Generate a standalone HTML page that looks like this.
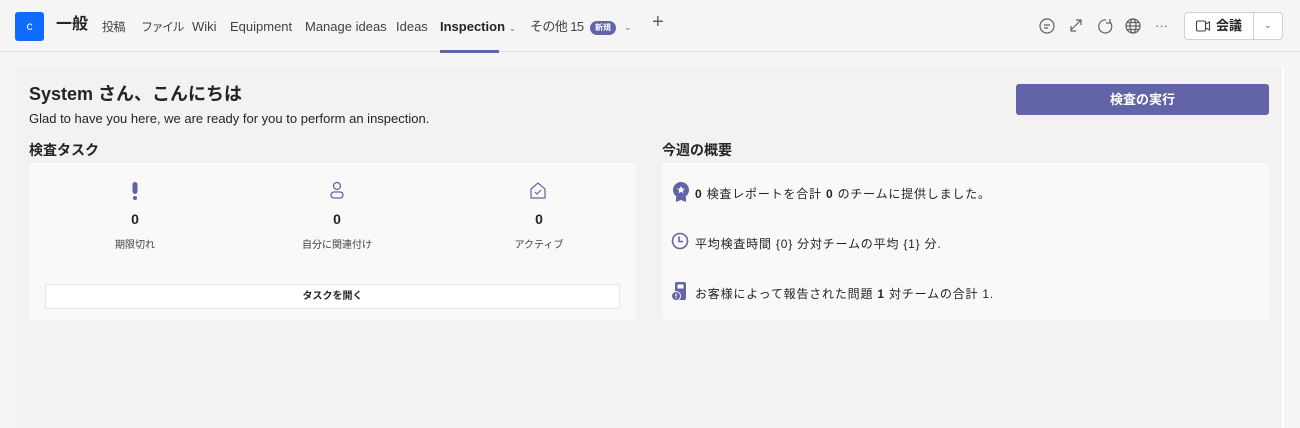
<!DOCTYPE html>
<html><head><meta charset="utf-8"><style>
*{box-sizing:border-box;margin:0;padding:0}
body{width:1300px;height:416px;overflow:hidden;background:#f5f5f5;font-family:"Liberation Sans","Noto Sans CJK JP",sans-serif;color:#242424;position:relative}
.top{position:absolute;left:0;top:0;width:1300px;height:52px;border-bottom:1px solid #e0e0e0;background:#f5f5f5}
.logo{position:absolute;left:15px;top:12px;width:29px;height:29px;background:#0f6cff;border-radius:3px;color:#fff;font-size:12px;text-align:center;line-height:29px}
.t{position:absolute;top:19px;font-size:13px;color:#424242;white-space:nowrap;line-height:16px}
.panel{position:absolute;left:16px;top:68px;width:1266px;height:360px;background:#f3f2f1}
.strip{position:absolute;left:1282px;top:68px;width:2px;height:360px;background:#fff}
.card{position:absolute;top:163px;width:607px;height:157px;background:#faf9f8;border-radius:2px}
.ico{position:absolute}
.num{position:absolute;font-size:14px;font-weight:bold;width:100px;text-align:center}
.lbl{position:absolute;font-size:10px;color:#424242;width:140px;text-align:center}
.row{position:absolute;left:695px;font-size:12px;color:#242424;white-space:nowrap;letter-spacing:0.8px}
</style></head><body>
<div class="top">
<div class="logo">c</div>
<div class="t" style="left:56px;top:17px;font-size:16px;font-weight:bold;color:#242424">一般</div>
<div class="t" style="left:102px;font-size:12px;letter-spacing:-0.5px">投稿</div>
<div class="t" style="left:141px;font-size:12px;letter-spacing:-1.5px">ファイル</div>
<div class="t" style="left:192px">Wiki</div>
<div class="t" style="left:230px">Equipment</div>
<div class="t" style="left:305px">Manage ideas</div>
<div class="t" style="left:396px">Ideas</div>
<div class="t" style="left:440px;font-weight:bold;color:#242424">Inspection <span style="font-weight:normal;font-size:9px;color:#777">&#8964;</span></div>
<div style="position:absolute;left:440px;top:50px;width:59px;height:3px;background:#6264a7"></div>
<div class="t" style="left:530px;letter-spacing:-0.6px">その他 15</div>
<div style="position:absolute;left:590px;top:21px;width:26px;height:14px;border-radius:7px;background:#6264a7;color:#fff;font-size:8px;text-align:center;line-height:14px;font-weight:bold">新規</div>
<div class="t" style="left:624px;font-size:9px;color:#777">&#8964;</div>
<div class="t" style="left:652px;top:14px;font-size:20px;color:#616161;font-weight:300">+</div>
<svg style="position:absolute;left:1038px;top:17px" width="104" height="18" fill="none" stroke="#616161" stroke-width="1.2">
<circle cx="9" cy="9" r="7"/><path d="M6 8h6M6 11h4"/>
<path d="M43 3l-10 10M38 3h5v5M33 9v5h5"/>
<path d="M72 5a6.5 6.5 0 1 1-4-2M72 2v4h-4"/>
<circle cx="95" cy="9" r="7"/><ellipse cx="95" cy="9" rx="3" ry="7"/><path d="M88 9h14M89 5.5h12M89 12.5h12"/>
</svg>
<div class="t" style="left:1155px;top:18px;color:#616161">···</div>
<div style="position:absolute;left:1184px;top:12px;width:99px;height:28px;border:1px solid #d1d1d1;border-radius:4px;background:#fff"></div>
<div style="position:absolute;left:1253px;top:12px;width:1px;height:28px;background:#d1d1d1"></div>
<svg style="position:absolute;left:1195px;top:18px" width="16" height="16" fill="none" stroke="#424242" stroke-width="1.1"><rect x="1.5" y="3" width="9" height="10" rx="1.5"/><path d="M10.5 6l4-2v8l-4-2"/></svg>
<div class="t" style="left:1216px;top:18px;font-weight:bold;color:#242424">会議</div>
<div class="t" style="left:1264px;top:17px;font-size:9px;color:#616161">&#8964;</div>
</div>
<div class="panel"></div><div class="strip"></div>
<div style="position:absolute;left:29px;top:80px;font-size:18px;font-weight:bold">System さん、こんにちは</div>
<div style="position:absolute;left:29px;top:111px;font-size:13px">Glad to have you here, we are ready for you to perform an inspection.</div>
<div style="position:absolute;left:29px;top:140px;font-size:14px;font-weight:bold">検査タスク</div>
<div style="position:absolute;left:662px;top:140px;font-size:14px;font-weight:bold">今週の概要</div>
<div style="position:absolute;left:1016px;top:84px;width:253px;height:31px;background:#6264a7;border-radius:3px;color:#fff;font-weight:bold;font-size:13px;text-align:center;line-height:31px">検査の実行</div>
<div class="card" style="left:29px"></div>
<div class="card" style="left:662px"></div>
<svg class="ico" style="left:128px;top:181px" width="14" height="20"><rect x="4.5" y="1" width="5" height="12" rx="2.5" fill="#6264a7"/><circle cx="7" cy="17" r="2" fill="#6264a7"/></svg>
<svg class="ico" style="left:329px;top:181px" width="16" height="20" fill="none" stroke="#6264a7" stroke-width="1.3"><circle cx="8" cy="5" r="3.5"/><rect x="2" y="11" width="12" height="6" rx="3"/></svg>
<svg class="ico" style="left:529px;top:181px" width="18" height="20" fill="none" stroke="#6264a7" stroke-width="1.2"><path d="M2 8l7-6 7 6v9H2z"/><path d="M6 11l2 2 4-4"/></svg>
<div class="num" style="left:85px;top:211px">0</div>
<div class="num" style="left:287px;top:211px">0</div>
<div class="num" style="left:489px;top:211px">0</div>
<div class="lbl" style="left:65px;top:236px">期限切れ</div>
<div class="lbl" style="left:267px;top:236px">自分に関連付け</div>
<div class="lbl" style="left:469px;top:236px">アクティブ</div>
<div style="position:absolute;left:45px;top:284px;width:575px;height:25px;background:#fff;border:1px solid #e6e6e6;font-size:10px;font-weight:bold;text-align:center;line-height:24px">タスクを開く</div>
<svg class="ico" style="left:671px;top:181px" width="20" height="22"><circle cx="10" cy="9" r="8" fill="#6264a7"/><path d="M10 5l1.2 2.5 2.6.3-2 1.8.6 2.6-2.4-1.4-2.4 1.4.6-2.6-2-1.8 2.6-.3z" fill="#fff"/><path d="M5 16v5l5-2 5 2v-5" fill="#6264a7"/></svg>
<div class="row" style="top:185px"><b>0</b> 検査レポートを合計 <b>0</b> のチームに提供しました。</div>
<svg class="ico" style="left:671px;top:232px" width="20" height="20" fill="none" stroke="#6264a7" stroke-width="1.6"><circle cx="9" cy="9" r="7.5"/><path d="M8 4.5v5h4"/></svg>
<div class="row" style="top:235px">平均検査時間 {0} 分対チームの平均 {1} 分.</div>
<svg class="ico" style="left:671px;top:281px" width="20" height="22"><rect x="4" y="1" width="11" height="18" rx="2" fill="#6264a7"/><rect x="6.5" y="3.5" width="6" height="4" fill="#fff"/><circle cx="5" cy="15" r="4.5" fill="#6264a7" stroke="#faf9f8" stroke-width="1"/><rect x="4.4" y="12.5" width="1.2" height="3" fill="#fff"/><rect x="4.4" y="16.3" width="1.2" height="1.2" fill="#fff"/></svg>
<div class="row" style="top:285px">お客様によって報告された問題 <b>1</b> 対チームの合計 1.</div>
</body></html>
